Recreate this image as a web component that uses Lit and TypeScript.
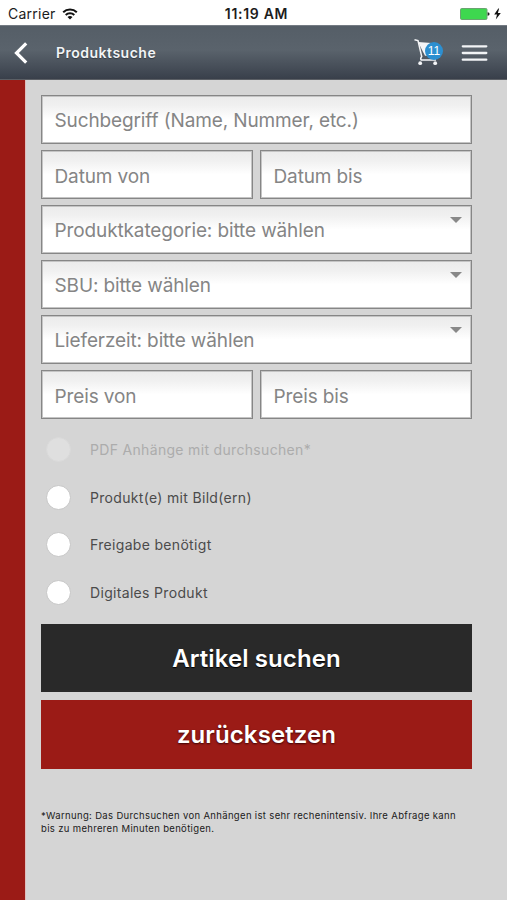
import { LitElement, html, css } from "lit";
import { customElement, property } from "lit/decorators.js";
import { classMap } from "lit/directives/class-map.js";

@customElement("status-bar")
class StatusBar extends LitElement {
  static styles = css`
    :host { display: grid; grid-template-columns: 1fr auto 1fr; align-items: center; height: 25px; padding: 2px 6px 0 8px; box-sizing: border-box; background: #fff; color: #1c1c1c; }
    .carrier { display: flex; align-items: center; gap: 6px; font-size: 14px; letter-spacing: 0.25px; }
    .time { font-size: 14px; font-weight: 600; letter-spacing: 0.7px; margin-left: 4px; }
    .power { display: flex; align-items: center; justify-content: flex-end; gap: 4px; }
    svg { display: block; }
  `;
  render() {
    return html`
      <div class="carrier"><span>Carrier</span>
        <svg width="16" height="12" viewBox="0 0 16 12" fill="none" stroke="#111" stroke-width="2">
          <path d="M1.2 4.2A9.8 9.8 0 0 1 14.8 4.2"/><path d="M3.7 7A6.2 6.2 0 0 1 12.3 7"/>
          <path d="M8 11.6L5.5 9.1A3.6 3.6 0 0 1 10.5 9.1Z" fill="#111" stroke="none"/>
        </svg>
      </div>
      <div class="time">11:19 AM</div>
      <div class="power">
        <svg width="31" height="12" viewBox="0 0 31 12">
          <rect x="1.5" y="0.5" width="26.5" height="11" rx="1.2" fill="#3ed74f" stroke="#6aa370"/>
          <path d="M28.6 4.2Q30.6 4.3 30.6 6T28.6 7.8Z" fill="#222"/>
        </svg>
        <svg width="7" height="12" viewBox="0 0 7 12"><path d="M4.3 0.5L0.2 6.5H3L1.8 11.5L6.8 4.9H3.9L5.1 0.5Z" fill="#111"/></svg>
      </div>`;
  }
}

@customElement("nav-bar")
class NavBar extends LitElement {
  static styles = css`
    :host { display: flex; align-items: center; height: 55px; padding: 0 19px 0 14px; box-sizing: border-box; border-top: 1px solid #747b83; border-bottom: 1px solid #5b5f65; background: linear-gradient(#555e67 0%, #5a636c 45%, #4c545e 68%, #3b424d 96%, #393f49 100%); color: #f2f4f6; }
    .title { flex: 1; margin-left: 28px; font-size: 14px; font-weight: 600; letter-spacing: 0.5px; text-shadow: 0 1px 1px #333a42; }
    .cart { position: relative; width: 29px; height: 28px; margin-right: 18px; }
    .count { position: absolute; left: 11px; top: 3px; width: 18px; height: 18px; border-radius: 50%; background: #2c8fd0; color: #fff; font: 12px/18px "Liberation Sans", sans-serif; text-align: center; }
    .menu { display: block; width: 27px; }
    svg { display: block; }
  `;
  render() {
    return html`
      <svg width="14" height="22" viewBox="0 0 14 22" fill="none" stroke="#fff" stroke-width="3.2"><path d="M12.2 1.3L2.5 11L12.2 20.7"/></svg>
      <div class="title">Produktsuche</div>
      <div class="cart">
        <svg width="26" height="28" viewBox="0 0 26 28">
          <path d="M0.5 0.8L4 1.6L7.7 17.5Q6 19.5 7.2 21H22" fill="none" stroke="#f4f5f7" stroke-width="1.5"/>
          <path d="M4 3L24 4.500L22 16L11 16.800Z" fill="#f4f5f7"/>
          <circle cx="6.2" cy="24.2" r="1.9" fill="#f4f5f7"/><circle cx="21.2" cy="24.2" r="1.9" fill="#f4f5f7"/>
        </svg>
        <span class="count">11</span>
      </div>
      <svg class="menu" width="27" height="18" viewBox="0 0 27 18" stroke="#f2f4f6" stroke-width="2.3" stroke-linecap="round"><path d="M1.8 2.300H25.300M1.800 9H25.300M1.800 15.700H25.300"/></svg>`;
  }
}

@customElement("form-field")
class FormField extends LitElement {
  @property() label = "";
  @property({ type: Boolean }) select = false;
  static styles = css`
    :host { display: flex; flex: 1; position: relative; align-items: center; height: 49px; box-sizing: border-box; padding: 3px 12px 0 12.5px; border: 1px solid #868686; box-shadow: inset 0 0 0 1px #c4c4c4; background: linear-gradient(#ebebeb, #f0f0f0 20%, #fff 50%); color: #858585; font-size: 19px; letter-spacing: -0.12px; white-space: nowrap; }
    :host([select]) { padding-top: 2px; }
    :host([search]) { padding-top: 1px; }
    .arrow { position: absolute; right: 9px; top: 11px; border: 6px solid transparent; border-top-color: #888; border-bottom: 0; }
  `;
  render() {
    return html`<span>${this.label}</span>${this.select ? html`<i class="arrow"></i>` : ""}`;
  }
}

@customElement("app-root")
class AppRoot extends LitElement {
  static styles = css`
    :host { display: flex; flex-direction: column; height: 900px; font-family: Inter, "Liberation Sans", sans-serif; background: #d5d5d5; }
    .body { display: flex; flex: 1; }
    .stripe { width: 25px; background: #9b1b16; border-right: 1px solid #dfbcbb; }
    .content { width: 431px; padding: 15px 0 0 15px; }
    .fields { display: grid; gap: 6px; }
    .row { display: flex; gap: 7px; }
    .toggles { display: grid; grid-auto-rows: 47.7px; margin: 6.5px 0 7.7px; }
    .toggle { display: flex; align-items: center; gap: 19px; padding-left: 5px; font-size: 14px; letter-spacing: 0.32px; color: #4b4b4b; }
    .knob { width: 23px; height: 23px; border: 1px solid #c6c6c6; border-radius: 50%; background: #fff; }
    .off { color: #acacac; }
    .off .knob { background: #dfdfdf; border-color: #d9d9d9; }
    .button { display: flex; align-items: center; justify-content: center; height: 68px; padding-top: 1px; box-sizing: border-box; background: #292929; color: #fff; font-size: 24px; font-weight: 600; letter-spacing: 0.1px; text-shadow: 0 1px 1px #000; }
    .reset { height: 69px; margin-top: 8px; background: #9b1b16; text-shadow: 0 1px 2px #3c0505; }
    .note { margin: 40px 0 0; font-size: 9.5px; line-height: 13.5px; letter-spacing: 0.34px; color: #202020; white-space: nowrap; }
  `;
  render() {
    const toggles = ["PDF Anhänge mit durchsuchen*", "Produkt(e) mit Bild(ern)", "Freigabe benötigt", "Digitales Produkt"];
    return html`
      <status-bar></status-bar>
      <nav-bar></nav-bar>
      <div class="body">
        <div class="stripe"></div>
        <div class="content">
          <div class="fields">
            <div class="row"><form-field search label="Suchbegriff (Name, Nummer, etc.)"></form-field></div>
            <div class="row"><form-field label="Datum von"></form-field><form-field label="Datum bis"></form-field></div>
            <div class="row"><form-field select label="Produktkategorie: bitte wählen"></form-field></div>
            <div class="row"><form-field select label="SBU: bitte wählen"></form-field></div>
            <div class="row"><form-field select label="Lieferzeit: bitte wählen"></form-field></div>
            <div class="row"><form-field label="Preis von"></form-field><form-field label="Preis bis"></form-field></div>
          </div>
          <div class="toggles">
            ${toggles.map((t, i) => html`<div class=${classMap({ toggle: true, off: i === 0 })}><span class="knob"></span><span>${t}</span></div>`)}
          </div>
          <div class="button">Artikel suchen</div>
          <div class="button reset">zurücksetzen</div>
          <p class="note">*Warnung: Das Durchsuchen von Anhängen ist sehr rechenintensiv. Ihre Abfrage kann<br>bis zu mehreren Minuten benötigen.</p>
        </div>
      </div>`;
  }
}
